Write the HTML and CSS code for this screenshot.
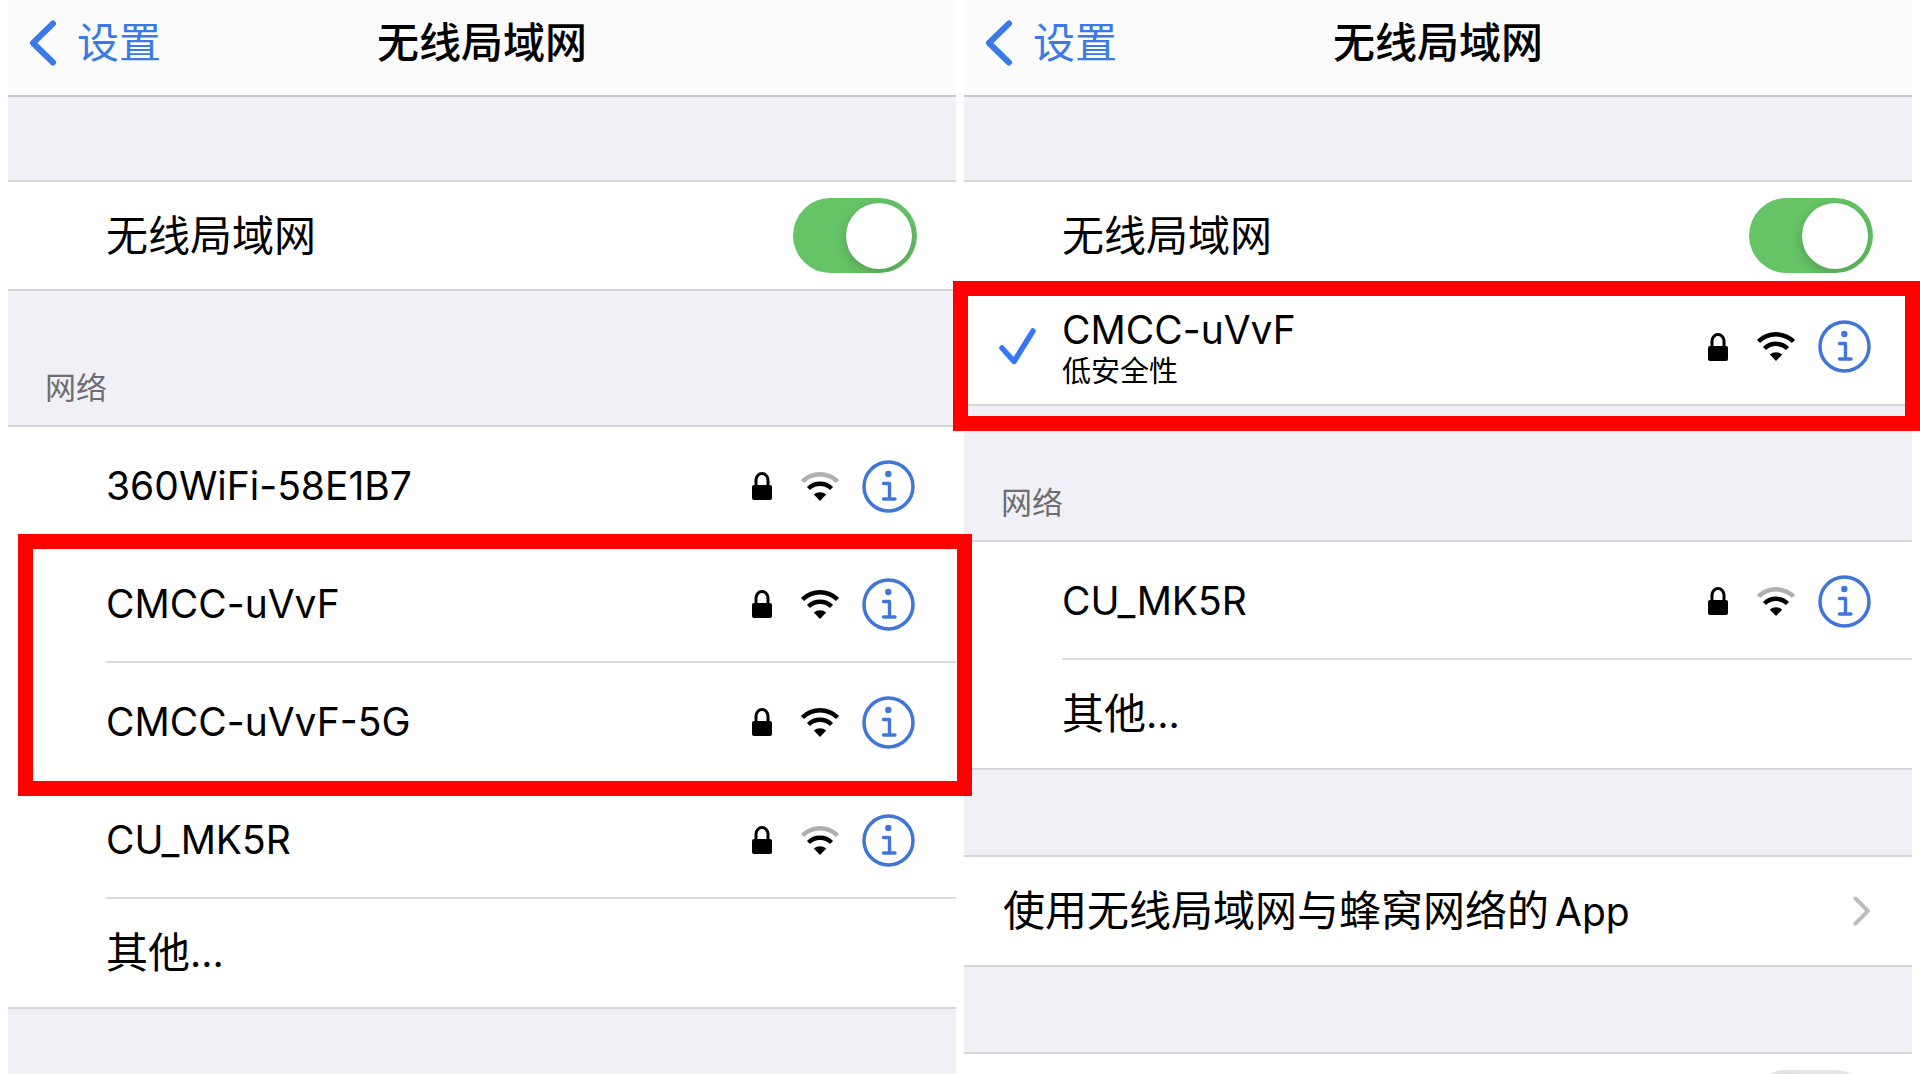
FILE: index.html
```html
<!DOCTYPE html>
<html lang="zh-CN">
<head>
  <meta charset="UTF-8">
  <title>无线局域网</title>
  <meta name="viewport" content="width=device-width, initial-scale=1">
  <link rel="stylesheet" href="styles.css">
</head>
<body>

  <!-- shared icons -->
  <svg class="sprite" aria-hidden="true">
    <symbol id="back" viewBox="0 0 28 46">
      <path d="M24 3.500L4 23l20 19.500" fill="none" stroke="currentColor" stroke-width="6" stroke-linecap="round" stroke-linejoin="round"/>
    </symbol>
    <symbol id="check" viewBox="0 0 37 37">
      <path d="M3 20l12 13.500L34 3" fill="none" stroke="currentColor" stroke-width="5.500" stroke-linecap="round" stroke-linejoin="round"/>
    </symbol>
    <symbol id="chevron" viewBox="0 0 18 30">
      <path d="M2.500 2.500L15 15 2.500 27.500" fill="none" stroke="currentColor" stroke-width="4" stroke-linecap="round" stroke-linejoin="round"/>
    </symbol>
    <symbol id="lock" viewBox="0 0 20 28">
      <rect y="13" width="20" height="15" rx="2"/>
      <path d="M4 14V8a6 6.500 0 0 1 12 0v6" fill="none" stroke="currentColor" stroke-width="3"/>
    </symbol>
    <symbol id="wifi" viewBox="0 0 38 29">
      <path class="wifi-outer" d="M1.500 9.500A25 25 0 0 1 36.500 9.500" fill="none" stroke-width="4.500"/>
      <path d="M7.500 16.500A16.500 16.500 0 0 1 30.500 16.500" fill="none" stroke="#000" stroke-width="4.500"/>
      <path d="M12.800 22.500A9.500 9.500 0 0 1 25.200 22.500L19 29z" stroke="none"/>
    </symbol>
    <symbol id="info" viewBox="0 0 53 53">
      <circle cx="26.500" cy="26.500" r="24.500" fill="none" stroke="currentColor" stroke-width="3.500"/>
      <circle cx="26.300" cy="14" r="3.200" fill="currentColor"/>
      <path d="M21.500 23.500h6v15.500M21.500 39h11.500" fill="none" stroke="currentColor" stroke-width="3.400" stroke-linecap="round" stroke-linejoin="round"/>
    </symbol>
  </svg>

  <main class="screens">

    <section class="screen">
      <header class="nav">
        <a class="back" href="#"><svg><use href="#back"/></svg>设置</a>
        <h1>无线局域网</h1>
      </header>

      <div class="list">
        <label class="row row-switch">
          <span class="name">无线局域网</span>
          <input class="switch" type="checkbox" checked>
        </label>
      </div>

      <h2>网络</h2>
      <div class="list">
        <div class="row network">
          <span class="name ssid">360WiFi-58E1B7</span>
          <svg class="lock"><use href="#lock"/></svg>
          <svg class="wifi weak"><use href="#wifi"/></svg>
          <button class="info" aria-label="信息"><svg><use href="#info"/></svg></button>
        </div>
        <div class="marked marked-pair">
          <div class="row network">
            <span class="name ssid">CMCC-uVvF</span>
            <svg class="lock"><use href="#lock"/></svg>
            <svg class="wifi"><use href="#wifi"/></svg>
            <button class="info" aria-label="信息"><svg><use href="#info"/></svg></button>
          </div>
          <div class="row network">
            <span class="name ssid">CMCC-uVvF-5G</span>
            <svg class="lock"><use href="#lock"/></svg>
            <svg class="wifi"><use href="#wifi"/></svg>
            <button class="info" aria-label="信息"><svg><use href="#info"/></svg></button>
          </div>
        </div>
        <div class="row network">
          <span class="name ssid">CU_MK5R</span>
          <svg class="lock"><use href="#lock"/></svg>
          <svg class="wifi weak"><use href="#wifi"/></svg>
          <button class="info" aria-label="信息"><svg><use href="#info"/></svg></button>
        </div>
        <button class="row">其他<span class="ssid">...</span></button>
      </div>
    </section>

    <section class="screen">
      <header class="nav">
        <a class="back" href="#"><svg><use href="#back"/></svg>设置</a>
        <h1>无线局域网</h1>
      </header>

      <div class="list">
        <label class="row row-switch">
          <span class="name">无线局域网</span>
          <input class="switch" type="checkbox" checked>
        </label>
        <div class="marked marked-single">
          <div class="row connected">
            <svg class="check"><use href="#check"/></svg>
            <div class="name">
              <div class="ssid">CMCC-uVvF</div>
              <div class="note">低安全性</div>
            </div>
            <svg class="lock"><use href="#lock"/></svg>
            <svg class="wifi"><use href="#wifi"/></svg>
            <button class="info" aria-label="信息"><svg><use href="#info"/></svg></button>
          </div>
        </div>
      </div>

      <h2>网络</h2>
      <div class="list">
        <div class="row network">
          <span class="name ssid">CU_MK5R</span>
          <svg class="lock"><use href="#lock"/></svg>
          <svg class="wifi weak"><use href="#wifi"/></svg>
          <button class="info" aria-label="信息"><svg><use href="#info"/></svg></button>
        </div>
        <button class="row">其他<span class="ssid">...</span></button>
      </div>

      <div class="list spaced">
        <a class="row plain" href="#">
          <span class="name">使用无线局域网与蜂窝网络的<span class="ssid app">App</span></span>
          <svg class="chevron"><use href="#chevron"/></svg>
        </a>
      </div>

      <div class="list spaced">
        <div class="row row-switch">
          <span class="name"></span>
          <input class="switch" type="checkbox" aria-label="询问是否加入网络">
        </div>
      </div>
    </section>

  </main>

</body>
</html>
```
FILE: styles.css
```css
* {
  margin: 0;
  padding: 0;
  box-sizing: border-box;
}

body {
  font-family: Inter, "Noto Sans CJK SC", sans-serif;
  font-size: 42px;
  line-height: 48px;
  color: #000;
  background-color: #fff;
}

button {
  font: inherit;
  color: inherit;
  background: none;
  border: none;
  cursor: pointer;
}

a {
  color: inherit;
  text-decoration: none;
}

.sprite {
  position: absolute;
  width: 0;
  height: 0;
}

.screens {
  display: grid;
  grid-template-columns: 1fr 1fr;
  gap: 8px;
  height: 100vh;
  padding: 0 8px;
  overflow: hidden;
}

.screen {
  background-color: #f1f0f6;
}

/* top bar */
.nav {
  display: grid;
  grid-template-columns: 1fr auto 1fr;
  align-items: center;
  height: 97px;
  margin-bottom: 83px;
  padding: 0 21px 10px;
  background-color: #fbfbfc;
  border-bottom: 2px solid #c6c6cb;
}

.back {
  display: flex;
  align-items: center;
  gap: 20px;
  color: #3b7ae6;
}

.back svg {
  width: 28px;
  height: 46px;
}

h1 {
  font-size: 42px;
  font-weight: 500;
}

h2 {
  height: 134px;
  padding: 73px 37px 0;
  font-size: 31px;
  font-weight: 400;
  color: #6d6d72;
}

/* rows */
.list {
  background-color: #fff;
  border-top: 2px solid #d6d6da;
  border-bottom: 2px solid #d6d6da;
}

.spaced {
  margin-top: 85px;
}

.row {
  position: relative;
  display: flex;
  align-items: center;
  width: 100%;
  height: 108px;
  padding: 0 41px 0 98px;
  text-align: left;
}

.row-switch {
  height: 107px;
  padding-right: 39px;
}

.network {
  height: 118px;
}

.network::after {
  content: "";
  position: absolute;
  left: 98px;
  right: 0;
  bottom: 0;
  height: 2px;
  background-color: #dcdcdf;
}

.marked .network:last-child::after {
  display: none;
}

.connected {
  height: 115px;
  padding-left: 35px;
}

.connected .name {
  padding-top: 2px;
}

.plain {
  padding-left: 39px;
}

.name {
  flex: 1;
}

.ssid {
  font-size: 39px;
  line-height: 48px;
}

.app {
  margin-left: 6px;
}

.note {
  font-size: 29px;
  line-height: 36px;
}

.check {
  width: 37px;
  height: 37px;
  margin-right: 26px;
  color: #3478f6;
}

.lock {
  width: 20px;
  height: 28px;
  margin-right: 29px;
}

.wifi {
  width: 38px;
  height: 29px;
  margin-right: 23px;
  stroke: #000;
}

.weak {
  stroke: #b0b0b0;
}

.info {
  width: 53px;
  height: 53px;
  color: #3f76d8;
}

.info svg {
  display: block;
  width: 53px;
  height: 53px;
}

.chevron {
  width: 18px;
  height: 30px;
  color: #bdbdc0;
}

.switch {
  appearance: none;
  width: 124px;
  height: 75px;
  padding: 5px;
  border-radius: 38px;
  background-color: #e6e6e8;
  overflow: hidden;
  cursor: pointer;
}

.switch::before {
  content: "";
  display: block;
  width: 66px;
  height: 66px;
  border-radius: 50%;
  background-color: #fff;
  box-shadow: 0 4px 12px rgba(0, 0, 0, 0.2);
}

.switch:checked {
  background-color: #65c466;
}

.switch:checked::before {
  margin-left: auto;
}

/* red frames drawn over the rows */
.marked {
  position: relative;
}

.marked::after {
  content: "";
  position: absolute;
  z-index: 2;
  border: 15px solid #f00;
  pointer-events: none;
}

.marked-pair::after {
  top: -11px;
  right: -16px;
  bottom: -15px;
  left: 10px;
}

.marked-single::after {
  top: -8px;
  right: -8px;
  bottom: -27px;
  left: -11px;
}
```
